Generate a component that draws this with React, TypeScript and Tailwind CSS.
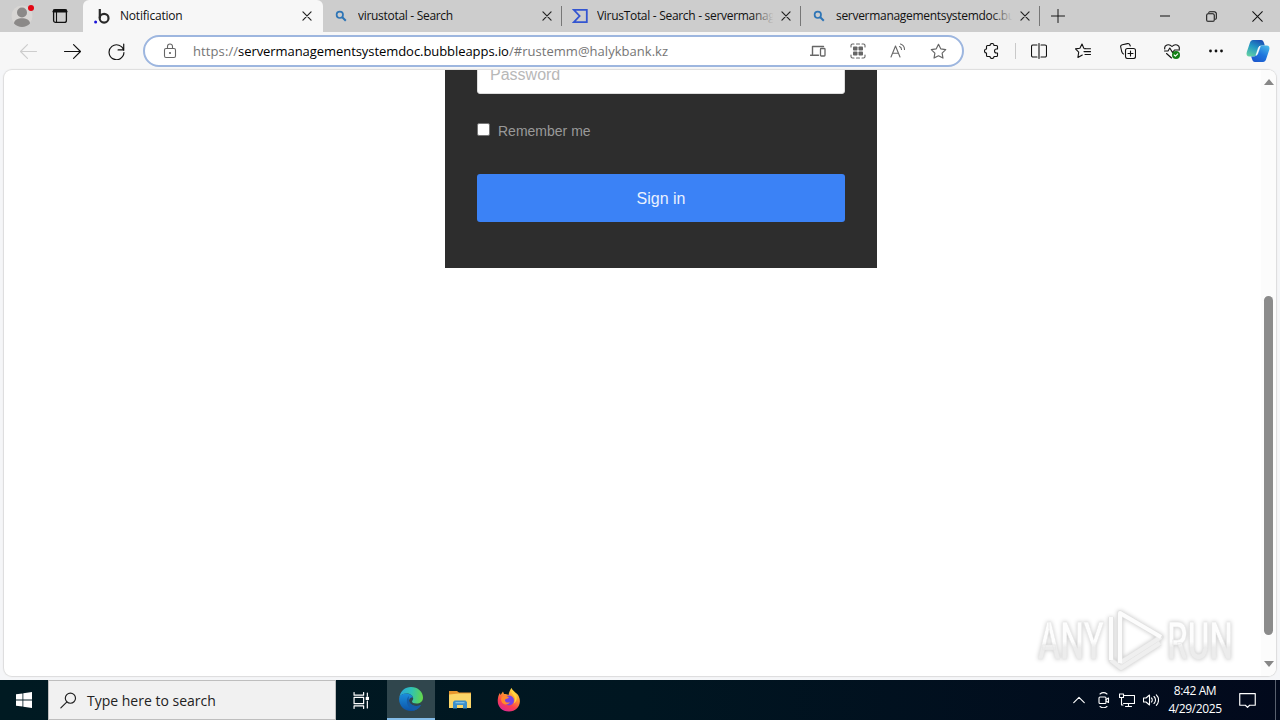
import type { ReactNode } from "react"

interface IconProps {
  children: ReactNode
  size?: number
  className?: string
}

// 16 unit grid, thin strokes
function Icon({ children, size = 16, className = "" }: IconProps) {
  return (
    <svg
      width={size}
      height={size}
      viewBox="0 0 16 16"
      fill="none"
      stroke="currentColor"
      strokeWidth="1.1"
      strokeLinecap="round"
      strokeLinejoin="round"
      className={`shrink-0 ${className}`}
    >
      {children}
    </svg>
  )
}

function Cell({ children, className }: { children: ReactNode; className: string }) {
  return <div className={`flex shrink-0 items-center justify-center ${className}`}>{children}</div>
}

function CloseIcon() {
  return (
    <Icon size={10} className="text-[#222]">
      <path d="M1.5 1.5l13 13M14.5 1.5l-13 13" strokeWidth="1.9" />
    </Icon>
  )
}

function BingIcon() {
  return (
    <svg width="12" height="12" viewBox="0 0 12 12" fill="none" stroke="#2e75b6" className="shrink-0">
      <circle cx="4.8" cy="4.8" r="3.2" strokeWidth="1.7" />
      <path d="M7.3 7.3l3.5 3.5" strokeWidth="2" />
    </svg>
  )
}

function VirusTotalIcon() {
  return (
    <svg width="16" height="16" viewBox="0 0 16 16" fill="none" stroke="#3355d1" strokeWidth="1.8" className="shrink-0">
      <path d="M1.8 1.9h13v12.2h-13L7.6 8z" />
    </svg>
  )
}

interface TabProps {
  icon: ReactNode
  title: string
  fade?: boolean
}

function Tab({ icon, title, fade }: TabProps) {
  return (
    <div className="flex h-8 w-[239px] shrink-0 items-center">
      <Cell className="w-[35px]">{icon}</Cell>
      <div className="relative h-5 w-[179px] overflow-hidden">
        <span className="block leading-5 tracking-[-0.3px] whitespace-nowrap">{title}</span>
        {fade && (
          <div className="absolute inset-y-0 right-0 w-6 bg-linear-to-r from-transparent to-[#cdcdcd] to-90%" />
        )}
      </div>
      <Cell className="w-[19px]">
        <CloseIcon />
      </Cell>
      <div className="ml-[5px] h-5 w-px bg-[#777]" />
    </div>
  )
}

function TabStrip() {
  return (
    <div className="flex h-8 items-center bg-[#cdcdcd] text-[12px] text-[#111]">
      <Cell className="w-11">
        <div className="relative h-[22px] w-[22px]">
          <svg width="22" height="22" viewBox="0 0 22 22">
            <circle cx="11" cy="11" r="10.5" fill="#d8d6d4" />
            <circle cx="11" cy="7.5" r="5" fill="#8b8988" />
            <path d="M3 18.5c0-7 16-7 16 0c-4 4.5-12 4.5-16 0z" fill="#8b8988" />
          </svg>
          <div className="absolute top-0 right-[-1px] h-1.5 w-1.5 rounded-full bg-[#e30613]" />
        </div>
      </Cell>
      <Cell className="w-8">
        <Icon className="text-[#111]">
          <rect x="1.6" y="1.6" width="12.8" height="12.8" rx="2" strokeWidth="1.3" />
          <path d="M1.5 3.5h13M2 2.3h12" strokeWidth="2.2" />
          <path d="M4.5 4v10" />
        </Icon>
      </Cell>
      <div className="ml-[7px] flex h-8 w-[240px] shrink-0 items-center rounded-t-md bg-[#f7f7f7]">
        <svg width="16" height="17" viewBox="0 0 16 17" className="ml-[11px] shrink-0">
          <circle cx="1.6" cy="14" r="1.5" fill="#1a13d8" />
          <path d="M5.8 1v9" stroke="#292929" strokeWidth="2.2" />
          <circle cx="10.1" cy="10.2" r="4.4" fill="none" stroke="#292929" strokeWidth="2.2" />
        </svg>
        <span className="ml-[10px] w-[178px] tracking-[-0.2px]">Notification</span>
        <Cell className="w-[18px]">
          <CloseIcon />
        </Cell>
      </div>
      <Tab icon={<BingIcon />} title="virustotal - Search" />
      <Tab icon={<VirusTotalIcon />} title="VirusTotal - Search - servermanagementsystem" fade />
      <Tab icon={<BingIcon />} title="servermanagementsystemdoc.bubbleapps.io" fade />
      <Cell className="ml-0.5 w-8">
        <Icon size={14} className="text-[#111]">
          <path d="M8 .5v15M.5 8h15" />
        </Icon>
      </Cell>
      <div className="ml-auto flex text-[#111]">
        <Cell className="w-[46px]">
          <Icon size={10}>
            <path d="M0 8h16" strokeWidth="1.7" />
          </Icon>
        </Cell>
        <Cell className="w-[46px]">
          <Icon size={11}>
            <rect x="1" y="4" width="11" height="11" rx="2" strokeWidth="1.5" />
            <path d="M4 2c.5-1 1-1 2-1h6c2 0 3 1 3 3v6c0 1-.3 1.600-1 2" strokeWidth="1.5" />
          </Icon>
        </Cell>
        <Cell className="w-[46px]">
          <Icon size={11}>
            <path d="M1 1l14 14M15 1L1 15" strokeWidth="1.5" />
          </Icon>
        </Cell>
      </div>
    </div>
  )
}

function AddressBar() {
  return (
    <div className="flex h-8 w-[821px] items-center rounded-full border-2 border-[#9db6df] bg-white text-[#666]">
      <Cell className="w-12 pl-0.5">
        <Icon>
          <rect x="2.500" y="5.500" width="11" height="9" rx="1.500" />
          <path d="M5.500 5.500V3.500a2.500 2.500 0 0 1 5 0v2" />
          <circle cx="8" cy="10" r=".5" fill="currentColor" />
        </Icon>
      </Cell>
      <div className="flex w-[605px] pt-px text-[13px] whitespace-nowrap text-[#757575]">
        <span className="w-[45px] tracking-[0.1px]">https://</span>
        <span className="w-[271px] tracking-[-0.06px] text-black">servermanagementsystemdoc.bubbleapps.io</span>
        <span className="tracking-[0.03px]">/#rustemm@halykbank.kz</span>
      </div>
      <Cell className="w-10">
        <Icon>
          <path d="M2.500 11V3.500h11M.5 12.300h8" strokeWidth="1.4" />
          <rect x="10.500" y="5.500" width="4.500" height="7.500" rx=".8" strokeWidth="1.3" />
        </Icon>
      </Cell>
      <Cell className="w-10">
        <Icon>
          <path d="M1 4V2.500C1 1.500 1.500 1 2.500 1H4M12 1h1.500c1 0 1.500.5 1.500 1.500V4M15 12v1.500c0 1-.5 1.500-1.500 1.500H12M4 15H2.500C1.500 15 1 14.500 1 13.500V12M6.500 1h3M6.500 15h3" />
          <g fill="currentColor" strokeWidth="0">
            <rect x="3" y="3.500" width="4.500" height="4" rx=".8" />
            <rect x="8.500" y="3.500" width="4.500" height="4" rx=".8" />
            <rect x="3" y="8.500" width="4.500" height="4" rx=".8" />
            <rect x="8.500" y="8.500" width="4.500" height="4" rx=".8" />
          </g>
        </Icon>
      </Cell>
      <Cell className="w-10">
        <Icon>
          <path d="M1 14L5.500 3L10 14M2.700 10.200h5.700M9.500 3.500c1.300.5 2 1.500 2 3M10.500 1c2.500.8 4 2.800 4 5.500" />
        </Icon>
      </Cell>
      <Cell className="w-10">
        <Icon size={17}>
          <path d="M8 1.200l2.100 4.300 4.700.7-3.400 3.300.8 4.700L8 12l-4.200 2.200.8-4.700L1.200 6.200l4.700-.7z" />
        </Icon>
      </Cell>
    </div>
  )
}

function CopilotIcon() {
  return (
    <svg width="24" height="24" viewBox="0 0 24 24">
      <defs>
        <linearGradient id="cpA" x1="0.7" y1="0" x2="0.2" y2="1">
          <stop offset="0" stopColor="#1b50b4" />
          <stop offset=".45" stopColor="#2397c4" />
          <stop offset="1" stopColor="#62d0a4" />
        </linearGradient>
        <linearGradient id="cpB" x1="0.8" y1="0" x2="0.2" y2="1">
          <stop offset="0" stopColor="#46b5e8" />
          <stop offset=".5" stopColor="#1f76dd" />
          <stop offset="1" stopColor="#1c56cc" />
        </linearGradient>
      </defs>
      <path d="M7 1h8c2 0 2.500 1.500 3 3l.8 2.500h-3c-1.500 0-2.300.8-2.800 2.300l-2 6c-.6 1.800-1.500 2.700-3.200 2.700H3.500C.8 17.500 0 15.500.8 13L4 3.500C4.500 2 5.500 1 7 1z" fill="url(#cpA)" />
      <path d="M17 23H9c-2 0-2.500-1.500-3-3l-.8-2.500h2.600c1.700 0 2.600-.9 3.200-2.700l2-6c.5-1.500 1.300-2.300 2.800-2.300h4.700c2.700 0 3.500 2 2.700 4.500L20 20.500c-.5 1.500-1.500 2.500-3 2.500z" fill="url(#cpB)" />
      <path d="M10 16.300l2.300-7c.4-1.200 1-2 2-2.300l-.5 1.500-2.300 6.500c-.3.700-.8 1.200-1.500 1.300z" fill="#fff" stroke="#fff" strokeWidth=".6" />
    </svg>
  )
}

function Toolbar() {
  return (
    <div className="flex h-[38px] items-center bg-[#f7f7f7] text-[#111]">
      <Cell className="ml-1.5 w-11 text-[#cdcdcd]">
        <Icon size={17}>
          <path d="M15.500 8h-15M7 1.500L.5 8L7 14.500" />
        </Icon>
      </Cell>
      <Cell className="w-11">
        <Icon size={17}>
          <path d="M.5 8h15M9 1.500L15.500 8L9 14.500" />
        </Icon>
      </Cell>
      <Cell className="w-11">
        <Icon size={17}>
          <path d="M14.800 7A7 7 0 1 0 15 9M14.800 1v5.500H9.500" />
        </Icon>
      </Cell>
      <div className="ml-[5px]">
        <AddressBar />
      </div>
      <Cell className="ml-[10px] w-9">
        <Icon>
          <path d="M3.500 2.500H6a2 2 0 0 1 4 0h2.500a1 1 0 0 1 1 1V6h-1a2 2 0 0 0 0 4h1v2.500a1 1 0 0 1-1 1H10a2 2 0 0 1-4 0H3.500a1 1 0 0 1-1-1V10a2 2 0 0 1 0-4V3.500a1 1 0 0 1 1-1z" />
        </Icon>
      </Cell>
      <div className="ml-[5px] h-4 w-px bg-[#c9c9c9]" />
      <Cell className="ml-px w-11">
        <Icon>
          <path d="M6 2H2a1.500 1.500 0 0 0-1.500 1.500v9A1.500 1.500 0 0 0 2 14h4M10 2h4a1.500 1.500 0 0 1 1.500 1.500v9A1.500 1.500 0 0 1 14 14h-4M8 .5v15" />
        </Icon>
      </Cell>
      <Cell className="w-11">
        <Icon>
          <path d="M10.500 5.500L8.800 5.300 7 1 4.900 5.300.5 5.900l3.200 3.300-.8 5.300 4.400-2.500M9.500 5.800h6M9 8.600h6.500M10 11.500h5.500" />
        </Icon>
      </Cell>
      <Cell className="ml-px w-11">
        <Icon>
          <rect x="5.500" y="5.500" width="10" height="10" rx="2" />
          <path d="M10.500 8v5M8 10.500h5M3.500 11C2 10.500 2 9.500 1.700 8.500L.7 4C.4 2.600 1 2 2.300 1.700L7.500.6c1.500-.3 2.300.4 2.800 2.400" />
        </Icon>
      </Cell>
      <Cell className="w-11">
        <Icon>
          <path d="M.8 6C-.2 2 5 .2 8 3.500C11 .2 16.200 2 15.200 6M.5 8H4l1.800-3L8.500 9.500 10.500 7h5M2.500 10.500L7.500 15" />
          <circle cx="12" cy="12" r="4" fill="#138017" stroke="none" />
          <path d="M10.200 12l1.200 1.200 2.300-2.300" stroke="#fff" />
        </Icon>
      </Cell>
      <Cell className="w-11">
        <Icon>
          <g fill="currentColor" stroke="none">
            <circle cx="2.500" cy="8" r="1.400" />
            <circle cx="8" cy="8" r="1.400" />
            <circle cx="13.500" cy="8" r="1.400" />
          </g>
        </Icon>
      </Cell>
      <Cell className="w-10">
        <CopilotIcon />
      </Cell>
    </div>
  )
}

function LoginForm() {
  return (
    <div className="h-[198px] w-[432px] overflow-hidden bg-[#2d2d2d] px-8 font-['Liberation_Sans',sans-serif] font-light">
      <div className="-mt-5 flex h-11 items-center rounded-[3px] border border-[#ddd] bg-white px-3 pt-[5px] text-[16px] text-[#b8b8b8]">
        Password
      </div>
      <div className="mt-[27px] flex h-5 items-center">
        <div className="mb-[3px] h-[13px] w-[13px] rounded-[2px] border border-[#767676] bg-white" />
        <span className="ml-2 text-[14px] text-[#999]">Remember me</span>
      </div>
      <div className="mt-[33px] flex h-12 items-center justify-center rounded-[3px] bg-[#3b82f6] pt-px text-[16px] text-[#eaf1fe]">
        Sign in
      </div>
    </div>
  )
}

function Watermark() {
  return (
    <svg
      width="204"
      height="70"
      viewBox="0 0 204 70"
      className="absolute right-[36px] bottom-0 drop-shadow-[0_0_2px_rgba(0,0,0,0.22)]"
    >
      <defs>
        <linearGradient id="wm" x1="0" y1="0" x2="0" y2="1">
          <stop offset=".5" stopColor="#fdfdfd" />
          <stop offset=".6" stopColor="#ececec" />
        </linearGradient>
      </defs>
      <g fill="url(#wm)" fontFamily="Roboto, sans-serif" fontSize="51" fontWeight="500" stroke="#e6e6e6" strokeWidth=".5">
        <text x="2" y="53" textLength="66" lengthAdjust="spacingAndGlyphs">ANY</text>
        <text x="131" y="53" textLength="66" lengthAdjust="spacingAndGlyphs">RUN</text>
      </g>
      <g fill="none" strokeLinejoin="round">
        <path d="M84 7L125 31L84 57zM75 11v43l10 8 39-25" stroke="#e2e2e2" strokeWidth="5.500" />
        <path d="M75 54l10 8 39-25M84 57L125 31" stroke="#efefef" strokeWidth="4" />
        <path d="M84 57V7L125 31M75 54V11" stroke="#fcfcfc" strokeWidth="4" />
      </g>
    </svg>
  )
}

function Page() {
  return (
    <div className="flex h-[610px] bg-[#f5f6f8] px-1 pb-1">
      <div className="relative flex w-full justify-between overflow-hidden rounded-lg bg-white shadow-[0_0_1px_1px_#dcdcdc]">
        <div className="ml-[441px]">
          <LoginForm />
        </div>
        <div className="flex w-[15px] flex-col items-center bg-[#fcfcfc] text-[#878787]">
          <svg width="10" height="6" viewBox="0 0 10 6" className="mt-[9px]">
            <path d="M0 6L5 0l5 6z" fill="currentColor" />
          </svg>
          <div className="mt-[211px] h-[339px] w-[9px] rounded-full bg-[#8b8b8b]" />
          <svg width="10" height="6" viewBox="0 0 10 6" className="mt-[26px]">
            <path d="M0 0h10L5 6z" fill="currentColor" />
          </svg>
        </div>
        <Watermark />
      </div>
    </div>
  )
}

function EdgeIcon() {
  return (
    <svg width="24" height="24" viewBox="0 0 24 24">
      <defs>
        <linearGradient id="edA" x1="0" y1="0.3" x2="1" y2="0.4">
          <stop offset="0" stopColor="#2aa6dc" />
          <stop offset=".5" stopColor="#2fc2b5" />
          <stop offset="1" stopColor="#63d74b" />
        </linearGradient>
        <linearGradient id="edB" x1="0" y1="0" x2="0" y2="1">
          <stop offset="0" stopColor="#1b8fdc" />
          <stop offset="1" stopColor="#0d54a8" />
        </linearGradient>
      </defs>
      <path d="M.3 10.500C1.500 4 6 0 12 0c7 0 12 5 12 10.500 0 4-3 6-6.500 6-3 0-4.500-1-4.500-2 0-.8 1.200-1.200 1.200-3C14.200 8.500 11 6.500 7.500 6.500 4 6.500 1.500 8 .3 10.500z" fill="url(#edA)" />
      <path d="M.1 12C.2 8.500 3.500 6.200 7.500 6.500c3.500.2 6 2 6.500 4-5-1-6.500 8 3.500 8.500 1.500 0 3-.3 4.500-1C19.500 22 16 24 12 24 5 24 0 18.500.1 12z" fill="url(#edB)" />
      <path d="M10 9c-4 3-2.500 12 5 14.500 3-.7 5.500-2.800 7-5.500-7 3-14-1.500-12-9z" fill="#155ca8" />
    </svg>
  )
}

function FolderIcon() {
  return (
    <svg width="22" height="18" viewBox="0 0 22 18">
      <path d="M0 0h8l2 1.500h12V16H0z" fill="#e7962e" />
      <path d="M0 3.500L10 2.500h12V17H0z" fill="#fbd568" />
      <path d="M4 17.500v-6.500L5.500 9.500h11l1.500 1.500v6.500h-4V14H8v3.500z" fill="#3d8fc9" />
      <path d="M6.500 11h9v1.300h-9z" fill="#7dbfe6" />
    </svg>
  )
}

function FirefoxIcon() {
  return (
    <svg width="24" height="24" viewBox="0 0 24 24">
      <defs>
        <linearGradient id="fxA" x1="0.8" y1="0" x2="0.3" y2="1">
          <stop offset="0" stopColor="#ffe44a" />
          <stop offset=".4" stopColor="#ff9330" />
          <stop offset=".7" stopColor="#fb3f50" />
          <stop offset="1" stopColor="#dc2794" />
        </linearGradient>
      </defs>
      <path d="M14.500 0c.5 3 6.500 5 7.500 9 3 7-2 14.500-10 14.500C4 23.500-.5 17 1 10c.4-2.500 1.200-4 2-5l.5 2L6 3.500l1 2.500c2 0 3 0 4.500 1C12 4 13 2 14.500 0z" fill="url(#fxA)" />
      <circle cx="12" cy="12.500" r="5" fill="#7542e5" />
      <path d="M5 8.500c3-1.500 5-.5 7 1-1 1.500-3.500.8-4 2.500-.4 2 2.500 3.500 5 2-1 3-5.500 3.500-8 .5-1.200-2-1.200-4 0-6z" fill="#ff8a2c" />
      <path d="M14.500 0c-1 3 0 5 2 7.500 2 2.500 1.500 6 0 8 3.500-1.500 4-6.500 2.500-9C17.500 4 15 3 14.500 0z" fill="#ffd33d" />
    </svg>
  )
}

function Taskbar() {
  return (
    <div className="flex h-10 items-center bg-linear-to-r from-[#001a22] via-[#001621] to-[#02091c] text-white">
      <Cell className="w-12">
        <svg width="16" height="16" viewBox="0 0 16 16" fill="#fff">
          <path d="M0 2.300l6.500-.9v6.200H0zM7.300 1.300L16 0v7.600H7.300zM0 8.400h6.500v6.200L0 13.700zM7.300 8.400H16V16l-8.700-1.300z" />
        </svg>
      </Cell>
      <div className="flex h-10 w-72 items-center border border-[#bebebe] bg-[#f1f1f1] text-[#222]">
        <Icon size={17} className="ml-[11px]">
          <circle cx="9.800" cy="5.800" r="4.800" />
          <path d="M6.300 9.500L.8 15" />
        </Icon>
        <span className="ml-[10px] text-[14px]">Type here to search</span>
      </div>
      <Cell className="ml-[3px] w-12">
        <Icon size={17} className="-ml-1">
          <path d="M1 .5V3h9V.5M1 15.500V13h9v2.500M1 5h9v6H1zM13.500 1v3M13.500 8.500V15" />
          <path d="M12.500 5h2v2h-2z" fill="currentColor" />
        </Icon>
      </Cell>
      <div className="flex h-10 w-12 items-center justify-center border-b-2 border-[#83bce8] bg-[#30464d]">
        <EdgeIcon />
      </div>
      <Cell className="w-[49px]">
        <FolderIcon />
      </Cell>
      <Cell className="w-[49px]">
        <FirefoxIcon />
      </Cell>
      <div className="ml-auto flex items-center">
        <Cell className="w-6">
          <Icon size={12}>
            <path d="M1 11.500L8 4.500l7 7" strokeWidth="1.500" />
          </Icon>
        </Cell>
        <Cell className="w-6 pl-px">
          <Icon>
            <rect x="3" y="5" width="7" height="6.500" rx="1" />
            <path d="M10 7.500l2.500-1.500v4.500L10 9M4 2c2-1.500 5-1.500 7 0M4 14.500c2 1.500 5 1.500 7 0" />
          </Icon>
        </Cell>
        <Cell className="w-6">
          <Icon>
            <path d="M4.500 3.500h11v8h-11M9.500 11.500V14M6.500 14.500h6M.5 2h4v3.500h-4zM2.500 5.500V13H4" />
          </Icon>
        </Cell>
        <Cell className="w-6">
          <Icon>
            <path d="M.5 6v4h2.500L6.500 13V3L3 6zM8.500 6c1 1 1 3 0 4M11 4.500c2 2 2 5 0 7M13.300 2.800c3 3 3 7.500 0 10.500" />
          </Icon>
        </Cell>
        <div className="flex w-16 flex-col items-center text-[12px] leading-[18px] tracking-[-0.4px] whitespace-nowrap">
          <span>8:42 AM</span>
          <span>4/29/2025</span>
        </div>
        <Cell className="w-10">
          <Icon size={17}>
            <path d="M.7 1.500h14.600v11H10L8 14.500 6 12.500H.7z" />
          </Icon>
        </Cell>
        <div className="ml-2 h-10 w-[5px] border-l border-[#59606e]" />
      </div>
    </div>
  )
}

export default function App() {
  return (
    <div className="h-[720px] w-[1280px] overflow-hidden font-['Open_Sans','Noto_Sans',sans-serif]">
      <TabStrip />
      <Toolbar />
      <Page />
      <Taskbar />
    </div>
  )
}
